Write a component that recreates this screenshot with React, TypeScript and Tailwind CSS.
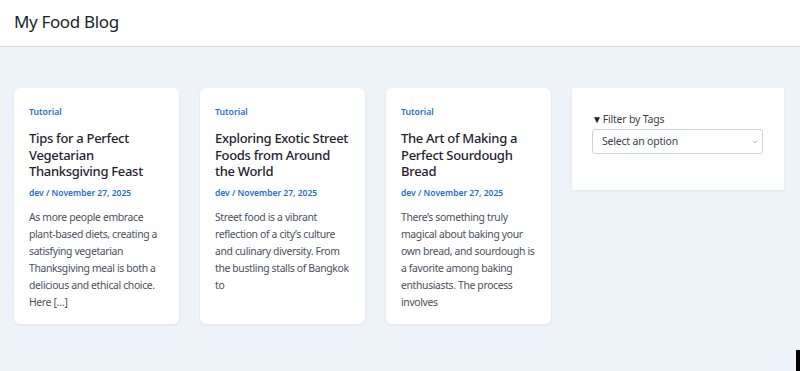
import { ChevronDown } from "lucide-react";

const posts = [
  {
    title: "Tips for a Perfect Vegetarian Thanksgiving Feast",
    excerpt:
      "As more people embrace plant-based diets, creating a satisfying vegetarian Thanksgiving meal is both a delicious and ethical choice. Here […]",
  },
  {
    title: "Exploring Exotic Street Foods from Around the World",
    excerpt:
      "Street food is a vibrant reflection of a city’s culture and culinary diversity. From the bustling stalls of Bangkok to",
  },
  {
    title: "The Art of Making a Perfect Sourdough Bread",
    excerpt:
      "There’s something truly magical about baking your own bread, and sourdough is a favorite among baking enthusiasts. The process involves",
  },
];

function PostCard({ title, excerpt }: { title: string; excerpt: string }) {
  return (
    <div className="w-[165px] h-[236px] bg-white rounded-md shadow-[0_1px_3px_rgba(30,40,80,0.08)] pl-[15px] pr-[15px] pt-[18px]">
      <div className="text-[8.7px] font-semibold text-[#1f6fc5] leading-[12px]">
        Tutorial
      </div>
      <h2 className="mt-[12px] text-[13px] tracking-[-0.3px] leading-[16.5px] font-medium text-[#1f2330]">
        {title}
      </h2>
      <div className="mt-[7px] text-[8.5px] font-semibold text-[#1f6fc5] leading-[12px]">
        dev / November 27, 2025
      </div>
      <p className="mt-[10px] text-[10.4px] tracking-[-0.35px] leading-[17px] text-[#4a4f5c]">
        {excerpt}
      </p>
    </div>
  );
}

export default function App() {
  return (
    <div
      className="relative w-[800px] h-[371px] bg-[#eef2f9] overflow-hidden"
      style={{ fontFamily: '"Noto Sans", "Open Sans", sans-serif' }}
    >
      {/* Header */}
      <header className="h-[47px] bg-white border-b border-[#d9dbe0] flex items-center px-[14px]">
        <h1 className="text-[17px] tracking-[-0.35px] text-[#1b1f2a] -mt-[2px]">
          My Food Blog
        </h1>
      </header>

      {/* Main */}
      <div className="flex gap-[21px] pl-[14px] pt-[41px]">
        {posts.map((p) => (
          <PostCard key={p.title} title={p.title} excerpt={p.excerpt} />
        ))}

        <aside className="w-[212px] h-[102px] bg-white shadow-[0_1px_3px_rgba(30,40,80,0.06)] px-[20px] pt-[24px]">
          <div className="text-[10.5px] tracking-[-0.2px] leading-[14px] text-[#3a3f4b] flex items-center">
            <span className="text-[10px] leading-[14px] mr-[1px] text-[#1b1f2a]">▼</span>
            Filter by Tags
          </div>
          <div className="mt-[3px] w-[171px] h-[25px] border border-[#cfd3da] rounded-[3px] flex items-center justify-between pl-[9px] pr-[3px]">
            <span className="text-[10.5px] tracking-[-0.2px] text-[#3a3f4b]">
              Select an option
            </span>
            <ChevronDown size={8} className="text-[#8a8f99]" />
          </div>
        </aside>
      </div>

      <div className="absolute right-0 bottom-0 w-[4px] h-[21px] bg-black" />
    </div>
  );
}
